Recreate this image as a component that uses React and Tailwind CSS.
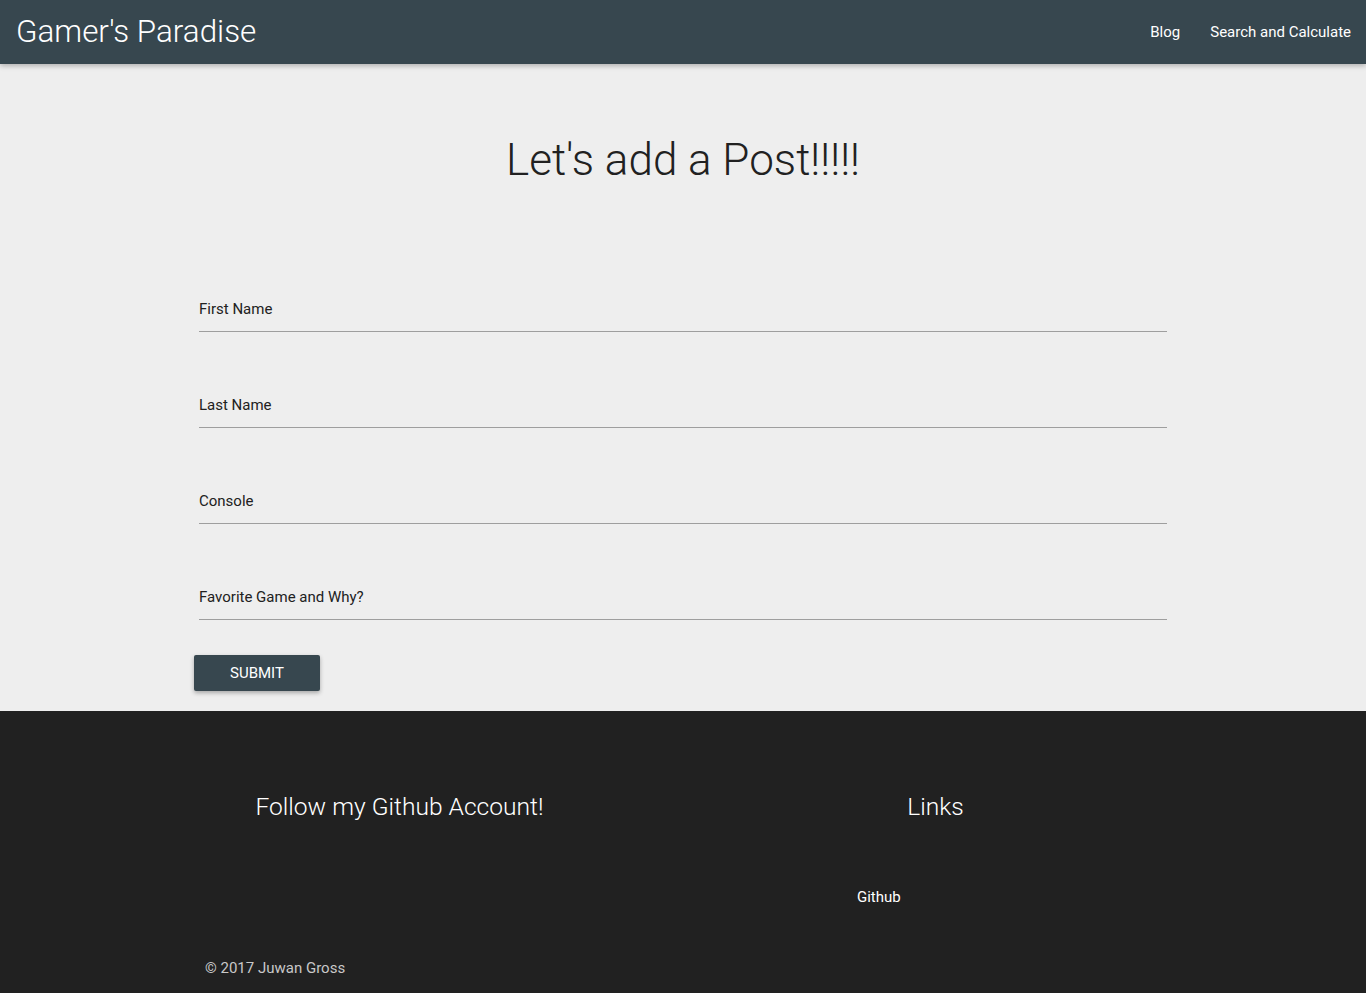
export default function App() {
  const fields = ["First Name", "Last Name", "Console", "Favorite Game and Why?"];
  return (
    <div className="min-h-[993px] flex flex-col bg-[#eeeeee]" style={{ fontFamily: "Roboto, 'Liberation Sans', sans-serif" }}>
      <header className="h-16 bg-[#37474f] flex items-center justify-between shadow-[0_2px_5px_rgba(0,0,0,0.26)] relative z-10">
        <div className="pl-4 text-white text-[31.4px] font-light leading-none">Gamer's Paradise</div>
        <nav className="flex items-center pr-[15px] text-white text-[15px]">
          <a className="px-[15px]">Blog</a>
          <a className="pl-[15px]">Search and Calculate</a>
        </nav>
      </header>
      <main className="h-[647px] flex flex-col">
        <h1 className="text-center text-[44px] font-light text-[#212121] mt-[68px] leading-[56px]">Let's add a Post!!!!!</h1>
        <form className="ml-[199px] w-[968px] mt-[111px] flex flex-col">
          {fields.map((f, i) => (
            <div key={f} className={`${i === 0 ? "" : "mt-[63px]"} flex flex-col`}>
              <label className="text-[15px] text-[#212121] leading-[20px] h-[20px]">{f}</label>
              <div className="mt-[12px] h-px bg-[#9e9e9e]"></div>
            </div>
          ))}
          <button type="button" className="mt-[35px] -ml-[5px] w-[126px] h-9 bg-[#37474f] text-white text-[15px] uppercase rounded-[2px] shadow-[0_2px_4px_rgba(0,0,0,0.3)]">Submit</button>
        </form>
      </main>
      <footer className="h-[282px] bg-[#212121] flex flex-col">
        <div className="flex mt-[80px]">
          <div className="w-[683px] flex justify-center pl-[116px]">
            <h5 className="text-white text-[24.6px] font-light leading-[32px]">Follow my Github Account!</h5>
          </div>
          <div className="flex-1 flex flex-col">
            <div className="w-[505px] flex justify-center">
              <h5 className="text-white text-[24.6px] font-light leading-[32px]">Links</h5>
            </div>
            <a className="ml-[174px] mt-[64px] text-white text-[15px] leading-[20px]">Github</a>
          </div>
        </div>
        <div className="ml-[205px] mt-[51px] text-[#c8c8c8] text-[15px] leading-[20px]">© 2017 Juwan Gross</div>
      </footer>
    </div>
  );
}
